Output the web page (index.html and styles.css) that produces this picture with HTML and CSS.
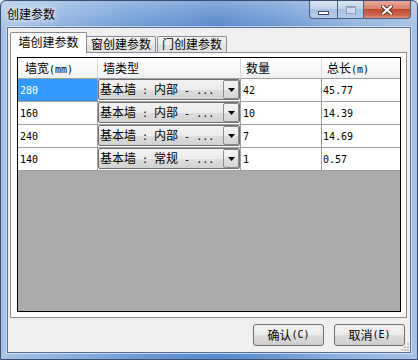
FILE: index.html
```html
<!DOCTYPE html>
<html>
<head>
<meta charset="utf-8">
<link rel="stylesheet" href="styles.css">
</head>
<body>
<div class="window">
  <div class="titlebar">
    <span class="title">创建参数</span>
    <div class="controls">
      <div class="ctl min"><span class="min-icon"></span></div>
      <div class="ctl max"><span class="max-icon"></span></div>
      <div class="ctl close">
        <svg width="12" height="10" viewBox="0 0 12 10"><path d="M2 1.5 L10 8.5 M10 1.5 L2 8.5" stroke="#5a2a22" stroke-width="4" stroke-linecap="square" fill="none"/><path d="M2 1.5 L10 8.5 M10 1.5 L2 8.5" stroke="#fff" stroke-width="2.2" stroke-linecap="square" fill="none"/></svg>
      </div>
    </div>
  </div>
  <div class="client">
    <div class="tabs">
      <div class="tab active">墙创建参数</div>
      <div class="tab inactive first">窗创建参数</div>
      <div class="tab inactive second">门创建参数</div>
    </div>
    <div class="pane">
      <div class="grid">
        <div class="row head">
          <div class="hc c1">墙宽<span class="a">(mm)</span></div>
          <div class="hc">墙类型</div>
          <div class="hc">数量</div>
          <div class="hc last">总长<span class="a">(m)</span></div>
        </div>
        <div class="row">
          <div class="cell num sel">280</div>
          <div class="cell cc"><div class="combo"><span class="ctext">基本墙<span class="a"> : </span>内部<span class="a"> - ...</span></span><span class="drop"><svg width="7" height="4" viewBox="0 0 7 4"><polygon points="0,0 7,0 3.5,4" fill="#000"/></svg></span></div></div>
          <div class="cell num">42</div>
          <div class="cell num last">45.77</div>
        </div>
        <div class="row">
          <div class="cell num">160</div>
          <div class="cell cc"><div class="combo"><span class="ctext">基本墙<span class="a"> : </span>内部<span class="a"> - ...</span></span><span class="drop"><svg width="7" height="4" viewBox="0 0 7 4"><polygon points="0,0 7,0 3.5,4" fill="#000"/></svg></span></div></div>
          <div class="cell num">10</div>
          <div class="cell num last">14.39</div>
        </div>
        <div class="row">
          <div class="cell num">240</div>
          <div class="cell cc"><div class="combo"><span class="ctext">基本墙<span class="a"> : </span>内部<span class="a"> - ...</span></span><span class="drop"><svg width="7" height="4" viewBox="0 0 7 4"><polygon points="0,0 7,0 3.5,4" fill="#000"/></svg></span></div></div>
          <div class="cell num">7</div>
          <div class="cell num last">14.69</div>
        </div>
        <div class="row">
          <div class="cell num">140</div>
          <div class="cell cc"><div class="combo"><span class="ctext">基本墙<span class="a"> : </span>常规<span class="a"> - ...</span></span><span class="drop"><svg width="7" height="4" viewBox="0 0 7 4"><polygon points="0,0 7,0 3.5,4" fill="#000"/></svg></span></div></div>
          <div class="cell num">1</div>
          <div class="cell num last">0.57</div>
        </div>
        <div class="empty"></div>
      </div>
    </div>
    <div class="buttons">
      <div class="btn">确认<span class="a">(C)</span></div>
      <div class="btn">取消<span class="a">(E)</span></div>
    </div>
    <svg class="grip" width="8" height="8" viewBox="0 0 8 8">
      <rect x="6" y="0" width="2" height="2" fill="#c4c4c4"/>
      <rect x="3" y="3" width="2" height="2" fill="#c4c4c4"/>
      <rect x="6" y="3" width="2" height="2" fill="#c4c4c4"/>
      <rect x="0" y="6" width="2" height="2" fill="#c4c4c4"/>
      <rect x="3" y="6" width="2" height="2" fill="#c4c4c4"/>
      <rect x="6" y="6" width="2" height="2" fill="#c4c4c4"/>
    </svg>
  </div>
</div>
</body>
</html>
```

FILE: styles.css
```css
* { box-sizing: border-box; }

body {
  margin: 0;
  background: #dfe8f3;
  font-family: "Noto Sans CJK SC", sans-serif;
  font-size: 12px;
  line-height: 12px;
  color: #000;
}

.a {
  font-family: "DejaVu Sans Mono", monospace;
  font-size: 10px;
}

.window {
  width: 418px;
  height: 360px;
  display: flex;
  flex-direction: column;
  padding: 0 6px 6px;
  border: 1px solid #3a4f72;
  border-radius: 6px 6px 0 0;
  background:
    linear-gradient(to bottom, rgba(255,255,255,0.28), rgba(255,255,255,0) 26px),
    linear-gradient(to right, #a9c4e6 0%, #93b5e0 12%, #6f9cd6 32%, #5a89cc 52%, #6c98d3 66%, #8fb1df 82%, #a8c3e6 100%);
}

.titlebar {
  height: 26px;
  display: flex;
  justify-content: space-between;
  align-items: flex-start;
}

.title {
  padding-top: 7px;
  line-height: 12px;
  color: #000;
  text-shadow: 0 0 6px #fff, 0 0 10px rgba(255,255,255,0.8);
}

.controls {
  display: flex;
}

.ctl {
  height: 18px;
  border: 1px solid #4a5f83;
  border-top: none;
  display: flex;
  justify-content: center;
}

.min {
  width: 28px;
  border-right: none;
  border-radius: 0 0 0 4px;
  background: linear-gradient(to bottom, #d9e5f3 0%, #c3d4ea 45%, #a8bfdf 50%, #b7cbe7 100%);
  align-items: flex-start;
}

.min-icon {
  margin-top: 10px;
  width: 11px;
  height: 4px;
  background: #fff;
  border: 1px solid #3d4d66;
}

.max {
  width: 27px;
  background: linear-gradient(to bottom, #d9e5f3 0%, #c3d4ea 45%, #a8bfdf 50%, #b7cbe7 100%);
  align-items: center;
}

.max-icon {
  width: 10px;
  height: 8px;
  border: 1px solid #8fa3c0;
  border-top-width: 2px;
  background: #cfdcee;
}

.close {
  width: 47px;
  border-left: none;
  border-radius: 0 0 4px 0;
  background: linear-gradient(to bottom, #e9a99b 0%, #d9806e 45%, #c24a33 50%, #d06a55 85%, #e09686 100%);
  align-items: center;
}

.client {
  flex: 1;
  position: relative;
  display: flex;
  flex-direction: column;
  padding: 4px 3px 6px 2px;
  background: #f0f0f0;
  border: 1px solid #5b6f90;
  box-shadow: 0 0 0 1px rgba(220, 232, 248, 0.75);
}

.tabs {
  display: flex;
  align-items: flex-end;
  height: 21px;
  margin-bottom: -1px;
}

.tab {
  line-height: 12px;
  text-align: center;
  border: 1px solid #898c95;
  border-bottom: none;
  white-space: nowrap;
}

.tab.active {
  position: relative;
  width: 77px;
  height: 21px;
  padding-top: 3px;
  background: #fff;
  border-radius: 2px 2px 0 0;
}

.tab.inactive {
  width: 70px;
  height: 16px;
  padding-top: 1px;
  margin-bottom: 1px;
  background: linear-gradient(to bottom, #f4f4f4 0%, #ebebeb 50%, #dedede 51%, #e3e3e3 100%);
  border-radius: 2px 2px 0 0;
}

.tab.first { margin-left: -1px; }
.tab.second { margin-left: 1px; }

.pane {
  height: 266px;
  display: flex;
  padding: 4px 5px 5px 6px;
  background: #fff;
  border: 1px solid #898c95;
}

.grid {
  flex: 1;
  display: flex;
  flex-direction: column;
  border: 1px solid #000;
  background: #fff;
}

.row {
  display: grid;
  grid-template-columns: 80px 143px 81px 78px;
}

.hc {
  height: 21px;
  padding: 4px 0 0 5px;
  line-height: 12px;
  border-right: 1px solid #d5d5d5;
  border-bottom: 1px solid #a0a0a0;
  background: linear-gradient(to bottom, #ffffff 0%, #f7f8fa 60%, #eff0f2 100%);
  white-space: nowrap;
}

.hc.c1 { padding-left: 7px; }
.hc.last { border-right: none; }

.cell {
  height: 23px;
  border-right: 1px solid #a0a0a0;
  border-bottom: 1px solid #a0a0a0;
  background: #fff;
}

.cell.last { border-right: none; }

.num {
  font-family: "DejaVu Sans Mono", monospace;
  font-size: 10px;
  line-height: 23px;
  padding-left: 2px;
}

.num.last { padding-left: 1px; }

.sel {
  background: #3399ff;
  color: #fff;
}

.cc {
  padding-bottom: 1px;
}

.combo {
  height: 21px;
  display: flex;
  align-items: flex-start;
  justify-content: space-between;
  border: 1px solid #707070;
  border-radius: 2px;
  background: linear-gradient(to bottom, #f3f3f3 0%, #ebebeb 50%, #dddddd 51%, #d2d2d2 100%);
}

.ctext {
  padding: 3px 0 0 1px;
  line-height: 12px;
  white-space: pre;
}

.drop {
  width: 16px;
  height: 19px;
  display: flex;
  align-items: center;
  justify-content: center;
  border: 1px solid #8c8c8c;
  border-radius: 2px;
  background: linear-gradient(to bottom, #f5f5f5 0%, #ececec 50%, #dfdfdf 51%, #d5d5d5 100%);
}

.drop svg { display: block; }

.empty {
  flex: 1;
  background: #ababab;
}

.buttons {
  display: flex;
  justify-content: flex-end;
  gap: 10px;
  margin-top: 6px;
  padding-right: 2px;
}

.btn {
  width: 71px;
  height: 22px;
  display: flex;
  align-items: center;
  justify-content: center;
  line-height: 12px;
  border: 1px solid #707070;
  border-radius: 3px;
  background: linear-gradient(to bottom, #f2f2f2 0%, #ebebeb 50%, #dddddd 51%, #cfcfcf 100%);
  white-space: nowrap;
}

.grip {
  position: absolute;
  right: 1px;
  bottom: 1px;
}
```
